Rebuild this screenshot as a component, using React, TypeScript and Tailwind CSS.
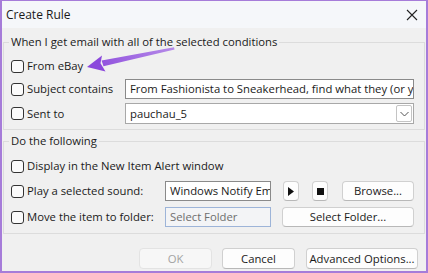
import React from "react";

const Box: React.FC = () => (
  <span className="w-[13px] h-[13px] shrink-0 rounded-[3px] border border-[#333333] bg-[#fbfbfb]" />
);

const Check: React.FC<{ label: string; className?: string }> = ({ label, className }) => (
  <label className={`flex items-center gap-[3px] shrink-0 ${className ?? ""}`}>
    <Box />
    <span className="whitespace-nowrap">{label}</span>
  </label>
);

const Btn: React.FC<{ children: React.ReactNode; className?: string; disabled?: boolean }> = ({
  children,
  className,
  disabled,
}) => (
  <button
    disabled={disabled}
    className={`h-full flex items-center justify-center rounded-[4px] border whitespace-nowrap ${
      disabled
        ? "border-[#e3e3e3] bg-[#f7f7f7] text-[#a3a3a3]"
        : "border-[#d0d0d0] border-b-[#b8b8b8] bg-[#fdfdfd] text-[#1a1a1a]"
    } ${className ?? ""}`}
  >
    {children}
  </button>
);

export default function App() {
  return (
    <div className="relative w-[428px] h-[273px] flex flex-col overflow-hidden border-x-2 border-b-2 border-t border-[#a67cd9] bg-[#f0f0f0] text-[11.3px] leading-[16px] text-[#1a1a1a] font-['Open_Sans',sans-serif]">
      {/* title bar */}
      <div className="h-[27px] shrink-0 flex items-center justify-between bg-[#f5f7fa] pl-[4px] pr-[6px]">
        <span className="text-[12px]">Create Rule</span>
        <svg width="12" height="12" viewBox="0 0 12 12" className="mr-[2px]">
          <path d="M1 1 L11 11 M11 1 L1 11" stroke="#222" strokeWidth="1.1" />
        </svg>
      </div>

      {/* conditions */}
      <fieldset className="min-w-0 mx-[1px] mt-[6px] border border-[#dcdcdc] pl-[7px] pr-[10px] pb-[5px]">
        <legend className="-ml-[2px] px-[2px]">When I get email with all of the selected conditions</legend>
        <div className="mt-[6px] h-[20px] flex items-center">
          <Check label="From eBay" />
        </div>
        <div className="mt-[3px] h-[20px] flex items-center">
          <Check label="Subject contains" className="w-[114px]" />
          <div className="flex-1 h-full min-w-0 flex items-center overflow-hidden border border-[#8a8a8a] bg-white px-[4px] whitespace-nowrap">
            From Fashionista to Sneakerhead, find what they (or you) love
          </div>
        </div>
        <div className="mt-[4px] h-[21px] flex items-center">
          <Check label="Sent to" className="w-[114px]" />
          <div className="flex-1 h-full min-w-0 flex items-center justify-between border border-[#a8a8a8] bg-white pl-[4px] pr-[1px]">
            <span>pauchau_5</span>
            <span className="w-[16px] h-[17px] flex items-center justify-center rounded-[2px] border border-[#c4c4c4] bg-white">
              <svg width="9" height="6" viewBox="0 0 9 6">
                <path d="M0.5 1 L4.5 5 L8.5 1" fill="none" stroke="#555" strokeWidth="1" />
              </svg>
            </span>
          </div>
        </div>
      </fieldset>

      {/* actions */}
      <fieldset className="min-w-0 mx-[1px] mt-[3px] border border-[#dcdcdc] pl-[7px] pr-[10px] pb-[6px]">
        <legend className="-ml-[2px] px-[2px]">Do the following</legend>
        <div className="mt-[7px] h-[20px] flex items-center">
          <Check label="Display in the New Item Alert window" />
        </div>
        <div className="mt-[5px] h-[20px] flex items-center">
          <Check label="Play a selected sound:" className="w-[154px]" />
          <div className="w-[106px] h-full flex items-center overflow-hidden border border-[#8a8a8a] bg-white px-[4px] whitespace-nowrap">
            Windows Notify Email
          </div>
          <Btn className="ml-[12px] w-[16px]">
            <svg width="6" height="9" viewBox="0 0 6 9">
              <path d="M0 0 L6 4.5 L0 9 Z" fill="#111" />
            </svg>
          </Btn>
          <Btn className="ml-[13px] w-[16px]">
            <span className="w-[7px] h-[7px] bg-[#111]" />
          </Btn>
          <Btn className="ml-[14px] flex-1">Browse...</Btn>
        </div>
        <div className="mt-[6px] h-[20px] flex items-center">
          <Check label="Move the item to folder:" className="w-[154px]" />
          <div className="w-[106px] h-full flex items-center border border-[#9db4d8] bg-[#f3f4f6] px-[4px] text-[#6e6e6e] whitespace-nowrap">
            Select Folder
          </div>
          <Btn className="ml-[11px] flex-1">Select Folder...</Btn>
        </div>
      </fieldset>

      {/* footer */}
      <div className="mt-[14px] h-[21px] flex justify-end gap-[10px] pr-[8px]">
        <Btn disabled className="w-[73px]">OK</Btn>
        <Btn className="w-[73px]">Cancel</Btn>
        <Btn className="w-[112px] ml-[1px]">Advanced Options...</Btn>
      </div>

      {/* annotation arrow */}
      <svg className="absolute left-0 top-0 pointer-events-none" width="428" height="273">
        <defs>
          <linearGradient id="arr" x1="172" y1="47" x2="84" y2="66" gradientUnits="userSpaceOnUse">
            <stop offset="0" stopColor="#b58ae8" />
            <stop offset="1" stopColor="#8b48dc" />
          </linearGradient>
        </defs>
        <path d="M172 46.2 L172.6 48.6 L101.5 65.2 L99.6 59.6 Z" fill="url(#arr)" />
        <path d="M85 66 L100 54.5 L98.5 62.3 L103.5 70.5 Z" fill="#8b48dc" />
      </svg>
    </div>
  );
}
